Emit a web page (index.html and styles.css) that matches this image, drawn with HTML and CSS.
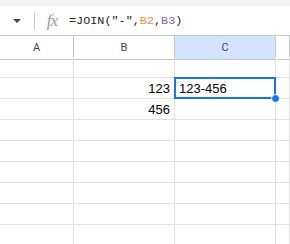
FILE: index.html
```html
<!DOCTYPE html>
<html lang="en">
<head>
  <meta charset="UTF-8">
  <meta name="viewport" content="width=device-width, initial-scale=1.0">
  <title>Sheet</title>
  <link rel="stylesheet" href="styles.css">
</head>
<body>
  <div class="topstrip"></div>

  <div class="formula-bar">
    <div class="namebox"><span class="caret"></span></div>
    <div class="divider"></div>
    <div class="fx">fx</div>
    <div class="formula">=JOIN("-",<span class="ref1">B2</span>,<span class="ref2">B3</span>)</div>
  </div>

  <div class="sheet">
    <div class="col-head">A</div>
    <div class="col-head">B</div>
    <div class="col-head picked">C</div>
    <div class="col-head"></div>

    <div class="cell"></div><div class="cell"></div><div class="cell"></div><div class="cell"></div>

    <div class="cell"></div>
    <div class="cell num">123</div>
    <div class="cell active">123-456<span class="sel"></span><span class="handle"></span></div>
    <div class="cell"></div>

    <div class="cell"></div><div class="cell num">456</div><div class="cell"></div><div class="cell"></div>
    <div class="cell"></div><div class="cell"></div><div class="cell"></div><div class="cell"></div>
    <div class="cell"></div><div class="cell"></div><div class="cell"></div><div class="cell"></div>
    <div class="cell"></div><div class="cell"></div><div class="cell"></div><div class="cell"></div>
    <div class="cell"></div><div class="cell"></div><div class="cell"></div><div class="cell"></div>
    <div class="cell"></div><div class="cell"></div><div class="cell"></div><div class="cell"></div>
    <div class="cell"></div><div class="cell"></div><div class="cell"></div><div class="cell"></div>
  </div>
</body>
</html>
```

FILE: styles.css
```css
body { margin: 0; background: #fff; font-family: "Liberation Sans", Arial, sans-serif; overflow: hidden; }

.topstrip { height: 6px; background: #f0f2f4; }

.formula-bar { height: 29px; display: flex; align-items: center; border-bottom: 1px solid #c4c7c5; }
.namebox { width: 34px; display: flex; justify-content: center; align-items: center; }
.caret { width: 0; height: 0; border-left: 4px solid transparent; border-right: 4px solid transparent; border-top: 4px solid #444; margin-top: 1px; }
.divider { width: 1px; height: 17px; background: #c7c7c7; }
.fx { width: 34px; text-align: center; font-family: "Liberation Serif", serif; font-style: italic; font-size: 17px; color: #9a9a9a; letter-spacing: -1px; }
.formula { font-family: "Liberation Mono", monospace; font-size: 11.8px; color: #222; padding-top: 1px; }
.ref1 { color: #e8913d; }
.ref2 { color: #8d5bb0; }

.sheet { display: grid; grid-template-columns: 74px 101px 101px 1fr; grid-auto-rows: 21px; }
.col-head { height: 24px; box-sizing: border-box; border-right: 1px solid #c4c7c5; border-bottom: 1px solid #c4c7c5; display: flex; align-items: center; justify-content: center; font-size: 11px; color: #444; font-family: Roboto, "Liberation Sans", sans-serif; }
.col-head.picked { background: #d3e3fd; }
.cell { box-sizing: border-box; border-right: 1px solid #e1e1e1; border-bottom: 1px solid #e1e1e1; font-size: 13px; line-height: 15px; color: #000; padding: 0 4px 2px 4px; display: flex; align-items: flex-end; position: relative; }
.cell.num { justify-content: flex-end; }
.cell.active { z-index: 2; }
.sel { position: absolute; top: -1px; left: -1px; right: -1px; bottom: -1px; border: 2px solid #1a73e8; }
.handle { position: absolute; right: -5px; bottom: -5px; width: 7px; height: 7px; border-radius: 50%; background: #1a73e8; border: 1px solid #fff; }
```
